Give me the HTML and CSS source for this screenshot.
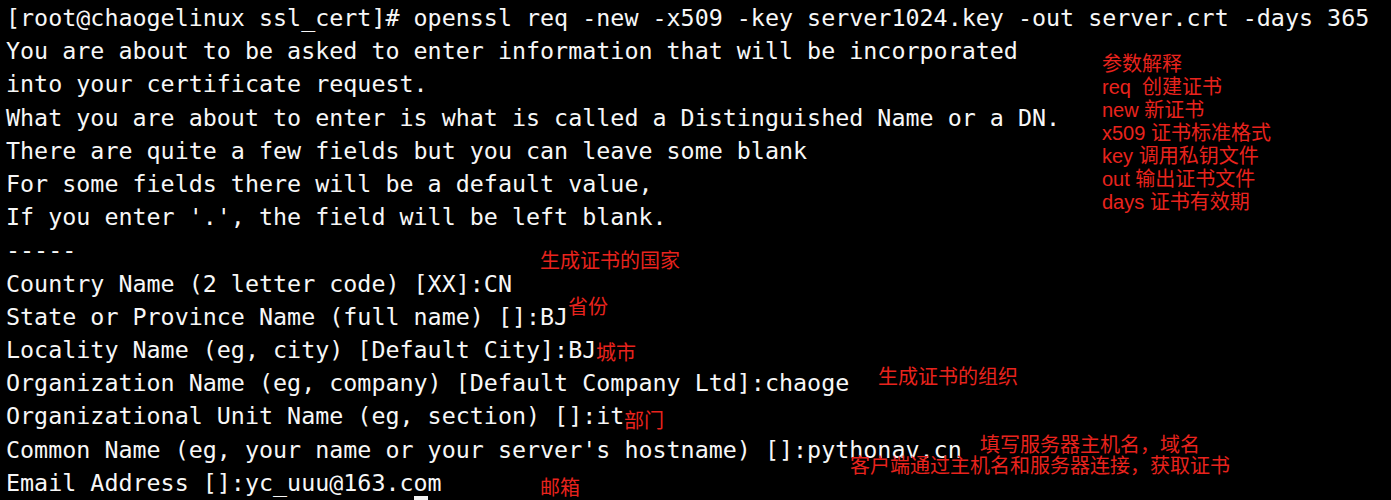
FILE: index.html
```html
<!DOCTYPE html>
<html>
<head>
<meta charset="utf-8">
<link rel="stylesheet" href="styles.css">
</head>
<body>
<div class="term">
<pre class="out">[root@chaogelinux ssl_cert]# openssl req -new -x509 -key server1024.key -out server.crt -days 365
You are about to be asked to enter information that will be incorporated
into your certificate request.
What you are about to enter is what is called a Distinguished Name or a DN.
There are quite a few fields but you can leave some blank
For some fields there will be a default value,
If you enter '.', the field will be left blank.
-----
Country Name (2 letter code) [XX]:CN
State or Province Name (full name) []:BJ
Locality Name (eg, city) [Default City]:BJ
Organization Name (eg, company) [Default Company Ltd]:chaoge
Organizational Unit Name (eg, section) []:it
Common Name (eg, your name or your server's hostname) []:pythonav.cn
Email Address []:yc_uuu@163.com</pre>
<div class="cursor"></div>
<div class="note note-params">参数解释<br>req&nbsp; 创建证书<br>new 新证书<br>x509 证书标准格式<br>key 调用私钥文件<br>out 输出证书文件<br>days 证书有效期</div>
<div class="note n-country">生成证书的国家</div>
<div class="note n-state">省份</div>
<div class="note n-city">城市</div>
<div class="note n-org">生成证书的组织</div>
<div class="note n-unit">部门</div>
<div class="note n-host">填写服务器主机名，域名</div>
<div class="note n-client">客户端通过主机名和服务器连接，获取证书</div>
<div class="note n-mail">邮箱</div>
</div>
</body>
</html>
```
FILE: styles.css
```css
html, body {
  margin: 0;
  padding: 0;
  background: #000;
  overflow: hidden;
}
.term {
  position: relative;
  width: 1391px;
  height: 500px;
  background: #000;
  overflow: hidden;
}
.out {
  margin: 0;
  padding: 2px 0 0 6px;
  font-family: "DejaVu Sans Mono", "Liberation Mono", monospace;
  font-size: 23.35px;
  line-height: 33.2px;
  color: #f7f7f7;
  white-space: pre;
}
.cursor {
  position: absolute;
  left: 414px;
  top: 496px;
  width: 14px;
  height: 4px;
  background: #f4f4f4;
}
.note {
  position: absolute;
  font-family: "Liberation Sans", "Noto Sans CJK SC", sans-serif;
  font-size: 20px;
  line-height: 23px;
  color: #e8231d;
  white-space: nowrap;
}
.note-params { left: 1102px; top: 53px; }
.n-country { left: 540px; top: 250px; }
.n-state { left: 568px; top: 296px; }
.n-city { left: 596px; top: 342px; }
.n-org { left: 878px; top: 366px; }
.n-unit { left: 624px; top: 410px; }
.n-host { left: 980px; top: 434px; }
.n-client { left: 850px; top: 455px; }
.n-mail { left: 540px; top: 477px; }
```
